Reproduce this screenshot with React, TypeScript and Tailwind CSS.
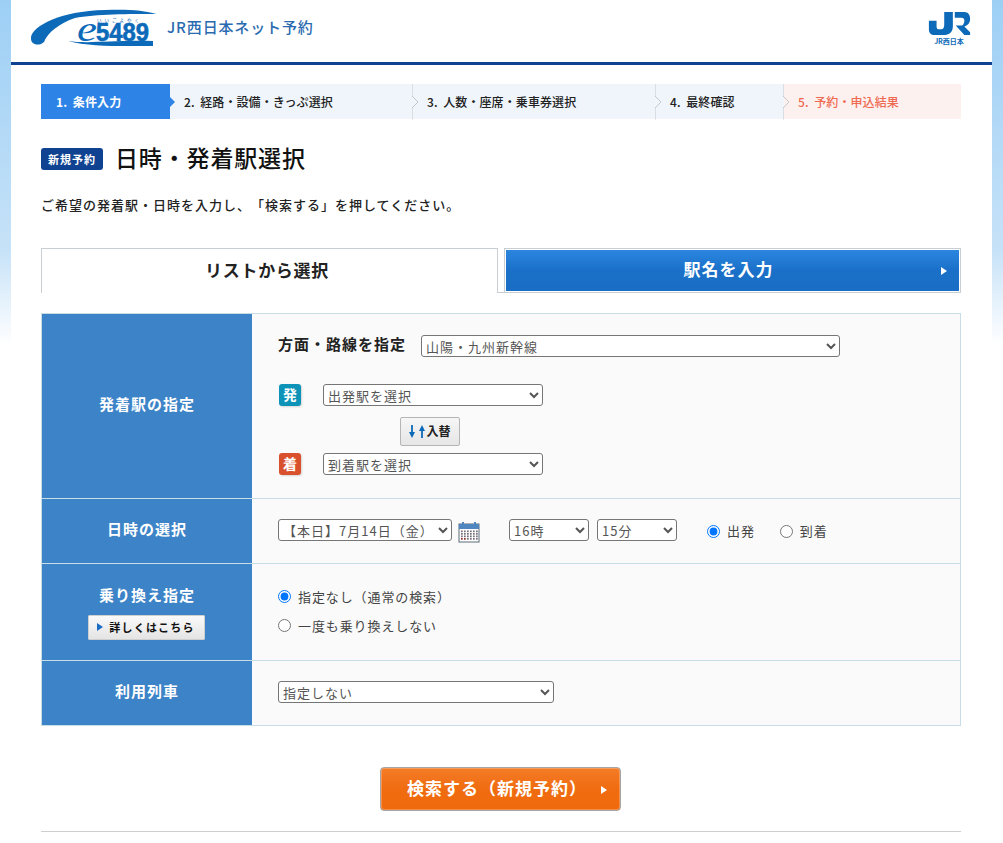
import React from "react";

const font = "font-['Noto_Sans_CJK_JP','Liberation_Sans',sans-serif]";

const steps = [
  { label: "1.  条件入力", w: "w-[129px]", cls: "bg-[#2e84e6] text-white pl-[15px] font-bold" },
  { label: "2.  経路・設備・きっぷ選択", w: "w-[243px]", cls: "bg-[#eff5fb] text-[#222] pl-[14px] font-medium" },
  { label: "3.  人数・座席・乗車券選択", w: "w-[243px]", cls: "bg-[#eff5fb] text-[#222] pl-[14px] font-medium" },
  { label: "4.  最終確認", w: "w-[128px]", cls: "bg-[#eff5fb] text-[#222] pl-[14px] font-medium" },
  { label: "5.  予約・申込結果", w: "w-[177px]", cls: "bg-[#fdf1f0] text-[#ee6a50] pl-[14px] font-medium" },
];

const selectCls =
  "h-[22px] rounded-[3px] border border-[#767676] bg-white text-[13px] text-[#555] tracking-[1px] pl-0 pb-[2px]";

// viewBox uses page coordinates, easier to compare with the reference
const Logo = () => (
  <svg width="130" height="44" viewBox="31 4 130 44" className="shrink-0">
    <path
      d="M31 37 C33 26 60 11 105 10 C125 9 145 10 156 14 C130 14 95 14 75 18 C60 23 48 32 44 42 C40 46 30 46 31 37 Z"
      fill="#0d6ab8"
    />
    <path d="M68 41 C90 44 110 40 153 41 L153 46 C120 46 90 47 68 41 Z" fill="#0d6ab8" />
    <text x="77" y="41" textLength="20" lengthAdjust="spacingAndGlyphs" fontFamily="'Liberation Serif',serif" fontStyle="italic" fontSize="36" fill="#0d6ab8">
      e
    </text>
    <text x="96" y="41" textLength="53" lengthAdjust="spacingAndGlyphs" fontFamily="'Liberation Sans',sans-serif" fontWeight="700" fontSize="25" stroke="#0d6ab8" strokeWidth="0.6" fill="#0d6ab8">
      5489
    </text>
    <text x="97" y="22" fontFamily="'Noto Sans CJK JP',sans-serif" fontSize="4.5" letterSpacing="3" fill="#0d6ab8">
      いいごよやく
    </text>
  </svg>
);

const JrLogo = () => (
  <div className="flex flex-col items-center w-[44px]">
    <svg width="43" height="23" viewBox="0 0 43 24">
      <path
        d="M16 0 H25 V15 C25 21 21 24 15 24 H6 C2 24 0 22 0 18 V9 H8 V15 C8 17 9 18 11 18 H13 C15 18 16 16 16 13 Z"
        fill="#0d6ab8"
      />
      <path
        d="M27 0 H37 C41 0 43 3 43 7 C43 11 41 14 37 15 L43 21 V24 H37 L28 14 H34 C36 14 37 11 37 9 C37 7 36 6 34 6 H27 Z"
        fill="#0d6ab8"
      />
    </svg>
    <span className="text-[7px] leading-[8px] mt-[2px] text-[#0d6ab8] font-bold">JR西日本</span>
  </div>
);

const Chevron = ({ muted }: { muted?: boolean }) => (
  <svg width="8" height="36" viewBox="0 0 8 36" className="absolute -left-px top-0">
    {muted ? (
      <path d="M0 0 V12 L6 18 L0 24 V36" fill="none" stroke="#c4c8cc" strokeWidth="1" />
    ) : (
      <path d="M0 12 L6 18 L0 24 Z" fill="#2e84e6" />
    )}
  </svg>
);

const Triangle = ({ className }: { className: string }) => (
  <span className={`inline-block w-0 h-0 border-y-[4px] border-y-transparent border-l-[6px] ${className}`} />
);

const Radio = ({ checked, label, name }: { checked?: boolean; label: string; name: string }) => (
  <label className="flex items-center gap-[7px] text-[13px] text-[#444] tracking-[0.9px]">
    <input type="radio" name={name} defaultChecked={checked} className="w-[13px] h-[13px] m-0 accent-[#0075ff]" />
    {label}
  </label>
);

const Badge = ({ text, color }: { text: string; color: string }) => (
  <span
    className={`flex items-center justify-center w-[22px] h-[22px] ml-px rounded-[3px] text-white font-bold text-[14px] shadow-[1px_1px_2px_rgba(0,0,0,0.15)] ${color}`}
  >
    {text}
  </span>
);

const CalendarIcon = () => (
  <svg width="22" height="22" viewBox="0 0 22 22">
    <rect x="1" y="3" width="20" height="18" fill="#fff" stroke="#5a6878" />
    <rect x="1" y="3" width="20" height="5" fill="#4f86c0" />
    <rect x="4" y="1" width="2" height="4" fill="#4f86c0" />
    <rect x="16" y="1" width="2" height="4" fill="#4f86c0" />
    {[9.5, 12, 14.5, 17].map((y) =>
      [3, 6, 9, 12, 15, 18].map((x) => (
        <rect key={`${x}-${y}`} x={x} y={y} width="1.7" height="1.7" fill={y === 17 && x < 9 ? "#8e2b2b" : "#77707a"} />
      ))
    )}
  </svg>
);

const Row = ({ title, h, last, sub, children }: { title: string; h: string; last?: boolean; sub?: React.ReactNode; children: React.ReactNode }) => (
  <div className={`flex ${h} ${last ? "" : "border-b border-[#c9dde6]"}`}>
    <div className="w-[210px] shrink-0 bg-[#3c83c7] text-white font-bold text-[15px] leading-[20px] tracking-[1px] flex flex-col items-center justify-center">
      <span className={sub ? "-mt-[2px]" : "-mt-[4px]"}>{title}</span>
      {sub}
    </div>
    <div className="flex-1 bg-[#fafafa] pl-[26px]">{children}</div>
  </div>
);

export default function App() {
  return (
    <div className={`min-h-screen bg-[linear-gradient(#9dcff5_0px,#c6e2f8_250px,#ffffff_345px)] flex justify-center [text-spacing-trim:space-all] ${font}`}>
      <div className="w-[981px] bg-white h-[843px] overflow-hidden">
        <header className="h-[65px] border-b-[3px] border-[#0f4291] flex items-center justify-between pl-[20px] pr-[21px]">
          <div className="flex items-center gap-[6px] -mt-[10px]">
            <Logo />
            <span className="mt-[3px] text-[15px] text-[#2a6bb0] tracking-[0.85px] font-medium">JR西日本ネット予約</span>
          </div>
          <div className="-mt-[5px]">
            <JrLogo />
          </div>
        </header>

        <div className="ml-[30px] mr-[31px]">
          <ol className="flex mt-[19px] h-[35px]">
            {steps.map((s, i) => (
              <li key={s.label} className={`relative flex items-center text-[12px] tracking-[0.1px] whitespace-pre ${s.w} ${s.cls}`}>
                {i === 1 && <Chevron />}
                {i > 1 && <Chevron muted />}
                {s.label}
              </li>
            ))}
          </ol>

          <div className="flex items-center mt-[26px] h-[28px]">
            <span className="flex items-center justify-center w-[62px] h-[22px] rounded-[3px] bg-[#0f4291] text-white text-[11px] tracking-[1px] font-bold">新規予約</span>
            <h1 className="ml-[12px] -mt-[4px] text-[23px] font-medium text-[#111] tracking-[0.85px]">日時・発着駅選択</h1>
          </div>

          <p className="mt-[20px] text-[13px] text-[#222] font-medium tracking-[1px] leading-[24px]">
            ご希望の発着駅・日時を入力し、「検索する」を押してください。
          </p>

          <div className="flex mt-[31px] h-[45px]">
            <button className="w-[457px] h-[45px] pr-[5px] pb-[3px] border border-b-0 border-[#c8ced2] bg-white text-[17px] tracking-[0.7px] font-bold text-[#222]">
              リストから選択
            </button>
            <div className="w-[6px] border-b border-[#c8ced2]" />
            <div className="flex-1 border border-[#c8ced2] p-px">
              <button className="relative w-full h-full pr-[8px] pb-[3px] bg-[linear-gradient(#2b86e0,#1a70c8_50%,#1a6dc5)] text-white text-[17px] tracking-[1px] font-bold">
                駅名を入力
                <Triangle className="absolute right-[12px] top-[17px] border-l-[#ffffff]" />
              </button>
            </div>
          </div>

          <div className="mt-[20px] border border-[#c9dde6]">
            <Row title="発着駅の指定" h="h-[185px]">
              <div className="flex items-center mt-[21px] h-[22px]">
                <span className="font-bold text-[15px] text-[#222] tracking-[1px] w-[143px] -mt-[3px]">方面・路線を指定</span>
                <select className={`${selectCls} w-[419px]`}>
                  <option>山陽・九州新幹線</option>
                </select>
              </div>
              <div className="flex items-center mt-[26px] h-[23px]">
                <Badge text="発" color="bg-[#0e93b8]" />
                <select className={`${selectCls} w-[220px] ml-[22px]`}>
                  <option>出発駅を選択</option>
                </select>
              </div>
              <div className="h-[46px] flex items-center pl-[122px] pt-[4px]">
                <button className="w-[60px] h-[29px] rounded-[2px] border border-[#b5b5b5] bg-[linear-gradient(#f6f6f6,#e6e6e6)] flex items-center justify-center text-[12px] font-bold text-[#222]">
                  <svg width="16" height="13" viewBox="0 0 16 13" className="mr-px">
                    <path d="M3 0 V8 M13 13 V5" fill="none" stroke="#0d6ab8" strokeWidth="1.8" />
                    <path d="M0 7 H6 L3 13 Z M10 6 H16 L13 0 Z" fill="#0d6ab8" />
                  </svg>
                  入替
                </button>
              </div>
              <div className="flex items-center h-[23px]">
                <Badge text="着" color="bg-[#d9512c]" />
                <select className={`${selectCls} w-[220px] ml-[22px]`}>
                  <option>到着駅を選択</option>
                </select>
              </div>
            </Row>

            <Row title="日時の選択" h="h-[65px]">
              <div className="flex items-center h-full">
                <select className={`${selectCls} w-[174px] text-[#333] tracking-[0.2px] mb-[2px]`}>
                  <option>【本日】7月14日（金）</option>
                </select>
                <span className="ml-[6px] mt-[2px]">
                  <CalendarIcon />
                </span>
                <select className={`${selectCls} w-[80px] ml-[29px] mb-[2px]`}>
                  <option>16時</option>
                </select>
                <select className={`${selectCls} w-[80px] ml-[8px] mb-[2px]`}>
                  <option>15分</option>
                </select>
                <div className="ml-[30px]">
                  <Radio name="dep" checked label="出発" />
                </div>
                <div className="ml-[25px]">
                  <Radio name="dep" label="到着" />
                </div>
              </div>
            </Row>

            <Row
              title="乗り換え指定"
              h="h-[97px]"
              sub={
                <button className="mt-[10px] -mb-[2px] w-[117px] h-[25px] -ml-[2px] border border-[#cfcfcf] rounded-[1px] bg-[linear-gradient(#fafafa,#e4e4e4)] flex items-center justify-center gap-[6px] text-[11px] tracking-[1.2px] font-bold text-[#111]">
                  <Triangle className="border-l-[#1a6dc5]" />
                  詳しくはこちら
                </button>
              }
            >
              <div className="flex flex-col h-full pt-[23px] gap-[9px]">
                <div className="h-[20px]">
                  <Radio name="transfer" checked label="指定なし（通常の検索）" />
                </div>
                <div className="h-[20px]">
                  <Radio name="transfer" label="一度も乗り換えしない" />
                </div>
              </div>
            </Row>

            <Row title="利用列車" h="h-[64px]" last>
              <div className="flex items-center h-full">
                <select className={`${selectCls} w-[276px] mb-[2px]`}>
                  <option>指定しない</option>
                </select>
              </div>
            </Row>
          </div>

          <div className="flex justify-center mt-[41px] pr-[2px]">
            <button className="relative w-[241px] h-[44px] rounded-[4px] border border-[#a5a5a5] bg-[linear-gradient(#f47c28,#f06c10_50%,#f06a0c)] text-white text-[17px] font-bold tracking-[1px] shadow-[inset_0_0_0_1px_rgba(255,255,255,0.25)]">
              <span className="block -ml-[6px] -mt-[2px]">検索する（新規予約）</span>
              <Triangle className="absolute right-[13px] top-[18px] border-l-[#ffffff]" />
            </button>
          </div>

          <div className="mt-[20px] border-t border-[#cfcfcf]" />
        </div>
      </div>
    </div>
  );
}
